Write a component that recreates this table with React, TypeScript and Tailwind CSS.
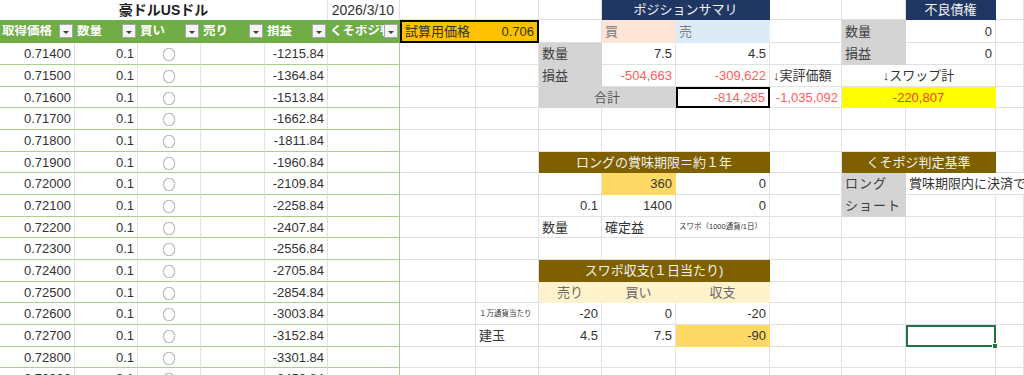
import React from "react";

type Cell = { t?: React.ReactNode; c?: string; s?: number };

// column spans (written out so Tailwind sees them)
const SPAN: Record<number, string> = { 1: "", 2: "col-span-2", 3: "col-span-3", 5: "col-span-5" };

const base = "flex items-center min-w-0 overflow-hidden whitespace-nowrap px-[3px]";
const GR = "border-r border-b border-r-[#e1e1e1] border-b-[#e1e1e1]";
const TB = "border-r border-b border-r-[#e1e1e1] border-b-[#a9d08e]";
const TBR = "border-r border-b border-r-[#a9d08e] border-b-[#a9d08e]";
const HD = "bg-[#70ad47] border-r border-b border-[#70ad47] text-white font-bold text-[12.5px] pl-[2px] pr-[1px]";
const NAVY = "bg-[#203764] border-r border-b border-[#203764] text-[#f2f2f2] justify-center";
const BROWN = "bg-[#7f6000] border-r border-b border-[#7f6000] text-[#f2f2f2] justify-center";
const GRAY = "bg-[#d4d4d4] border-r border-b border-[#d4d4d4] text-[#404040]";
const RED = "text-[#ff5b5b]";

const E: Cell = { c: GR };
const empties = (n: number): Cell[] => Array.from({ length: n }, () => E);

const Filter = () => (
  <span className="ml-auto flex h-[14px] w-[14px] shrink-0 items-center justify-center border border-[#a6a6a6] bg-[#f4f4f4]">
    <span className="mt-[3px] border-x-[3px] border-t-[3px] border-x-transparent border-t-[#404040]" />
  </span>
);

const Header = ({ label }: { label: string }) => (
  <>
    <span className="min-w-0 overflow-hidden">{label}</span>
    <Filter />
  </>
);

const tableRow = (i: number): Cell[] => {
  const price = (0.714 + i * 0.001).toFixed(5);
  const loss = (-(1215.84 + 149 * i)).toFixed(2);
  return [
    { t: price, c: `${TB} justify-end` },
    { t: "0.1", c: `${TB} justify-end` },
    { t: "○", c: `${TB} justify-center font-['Noto_Sans_CJK_JP'] text-[13px] text-[#666]` },
    { c: TB },
    { t: loss, c: `${TB} justify-end` },
    { c: TBR },
  ];
};

const rightParts: Cell[][] = [
  // row 1
  [E, E, E, { t: "ポジションサマリ", c: NAVY, s: 2 }, E, E, { t: "不良債権", c: NAVY }, E],
  // row 2
  [
    {
      t: (
        <>
          <span>試算用価格</span>
          <span>0.706</span>
        </>
      ),
      c: "bg-[#ffc000] border-2 border-black justify-between text-[#333]",
      s: 2,
    },
    E,
    { t: "買", c: "bg-[#fce4d6] border-r border-b border-[#fce4d6] text-[#7f7f7f]" },
    { t: "売", c: "bg-[#ddebf7] border-r border-b border-[#ddebf7] text-[#7f7f7f]" },
    E,
    { t: "数量", c: GRAY },
    { t: "0", c: `${GR} justify-end` },
    E,
  ],
  // row 3
  [
    E,
    E,
    { t: "数量", c: GRAY },
    { t: "7.5", c: `${GR} justify-end` },
    { t: "4.5", c: `${GR} justify-end` },
    E,
    { t: "損益", c: GRAY },
    { t: "0", c: `${GR} justify-end` },
    E,
  ],
  // row 4
  [
    E,
    E,
    { t: "損益", c: GRAY },
    { t: "-504,663", c: `${GR} justify-end ${RED}` },
    { t: "-309,622", c: `${GR} justify-end ${RED}` },
    { t: "↓実評価額", c: GR },
    { t: "↓スワップ計", c: `${GR} justify-center`, s: 2 },
    E,
  ],
  // row 5
  [
    E,
    E,
    { t: "合計", c: `${GRAY} justify-center text-[#595959]`, s: 2 },
    { t: "-814,285", c: `border-2 border-black justify-end ${RED}` },
    { t: "-1,035,092", c: `${GR} justify-end ${RED}` },
    { t: "-220,807", c: "bg-[#ffff00] border-r border-b border-[#ffff00] justify-center text-[#f0402a]", s: 2 },
    E,
  ],
  // row 6
  empties(9),
  // row 7
  empties(9),
  // row 8
  [E, E, { t: "ロングの賞味期限＝約１年", c: BROWN, s: 3 }, E, { t: "くそポジ判定基準", c: BROWN, s: 2 }, E],
  // row 9
  [
    E,
    E,
    E,
    { t: "360", c: "bg-[#ffd966] border-r border-b border-[#ffd966] justify-end" },
    { t: "0", c: `${GR} justify-end` },
    E,
    { t: "ロング", c: `${GRAY} tracking-[1px]` },
    // text runs on into the next column, as a spreadsheet does
    { t: "賞味期限内に決済で", c: "border-b border-b-[#e1e1e1] overflow-visible" },
    { c: "border-b border-b-[#e1e1e1]" },
  ],
  // row 10
  [
    E,
    E,
    { t: "0.1", c: `${GR} justify-end` },
    { t: "1400", c: `${GR} justify-end` },
    { t: "0", c: `${GR} justify-end` },
    E,
    { t: "ショート", c: `${GRAY} tracking-[1px]` },
    E,
    E,
  ],
  // row 11
  [
    E,
    E,
    { t: "数量", c: GR },
    { t: "確定益", c: GR },
    { t: "スワポ（1000通貨/1日）", c: `${GR} text-[7.5px] px-[2px]` },
    ...empties(4),
  ],
  // row 12
  empties(9),
  // row 13
  [E, E, { t: "スワポ収支(１日当たり)", c: BROWN, s: 3 }, ...empties(4)],
  // row 14
  [
    E,
    E,
    { t: "売り", c: "bg-[#fff2cc] border-r border-b border-[#fff2cc] justify-center text-[#6b6b6b]" },
    { t: "買い", c: "bg-[#fff2cc] border-r border-b border-[#fff2cc] justify-center text-[#6b6b6b]" },
    { t: "収支", c: "bg-[#fff2cc] border-r border-b border-[#fff2cc] justify-center text-[#6b6b6b]" },
    ...empties(4),
  ],
  // row 15
  [
    E,
    { t: "１万通貨当たり", c: `${GR} text-[7.5px]` },
    { t: "-20", c: `${GR} justify-end` },
    { t: "0", c: `${GR} justify-end` },
    { t: "-20", c: `${GR} justify-end` },
    ...empties(4),
  ],
  // row 16
  [
    E,
    { t: "建玉", c: GR },
    { t: "4.5", c: `${GR} justify-end` },
    { t: "7.5", c: `${GR} justify-end` },
    { t: "-90", c: "bg-[#ffd966] border-r border-b border-[#ffd966] justify-end" },
    E,
    E,
    {
      // selected cell with fill handle
      t: <span className="absolute -bottom-[4px] -right-[4px] h-[6px] w-[6px] border border-white bg-[#217346]" />,
      c: "relative overflow-visible border-2 border-[#217346] z-10",
    },
    E,
  ],
  // row 17
  empties(9),
  // row 18
  empties(9),
];

const rows: Cell[][] = rightParts.map((right, r) => {
  if (r === 0) {
    return [
      { t: "豪ドルUSドル", c: `${GR} border-b-0 justify-center font-bold text-[14px] text-[#222]`, s: 5 },
      { t: "2026/3/10", c: `${GR} border-b-0 justify-end text-[14px] pr-[5px]` },
      ...right,
    ];
  }
  if (r === 1) {
    return [
      { t: <Header label="取得価格" />, c: HD },
      { t: <Header label="数量" />, c: HD },
      { t: <Header label="買い" />, c: HD },
      { t: <Header label="売り" />, c: HD },
      { t: <Header label="損益" />, c: HD },
      { t: <Header label="くそポジ判定" />, c: HD },
      ...right,
    ];
  }
  return [...tableRow(r - 2), ...right];
});

export default function App() {
  return (
    <div className="h-[375px] w-[1024px] overflow-hidden bg-white font-['Liberation_Sans','Noto_Sans_CJK_JP',sans-serif] text-[13px] leading-none text-[#333]">
      <div className="grid grid-cols-[75px_63px_63px_64px_63px_72px_76px_63px_63px_74px_94px_72px_64px_90px_28px] grid-rows-[20px_23px_22px_22px_21px_22px_22px_21px_22px_22px_21px_22px_22px_21px_22px_22px_21px_22px]">
        {rows.flatMap((row, r) =>
          row.map((cell, i) => (
            <div key={`${r}-${i}`} className={`${base} ${SPAN[cell.s ?? 1]} ${cell.c ?? GR}`}>
              {cell.t}
            </div>
          ))
        )}
      </div>
    </div>
  );
}
